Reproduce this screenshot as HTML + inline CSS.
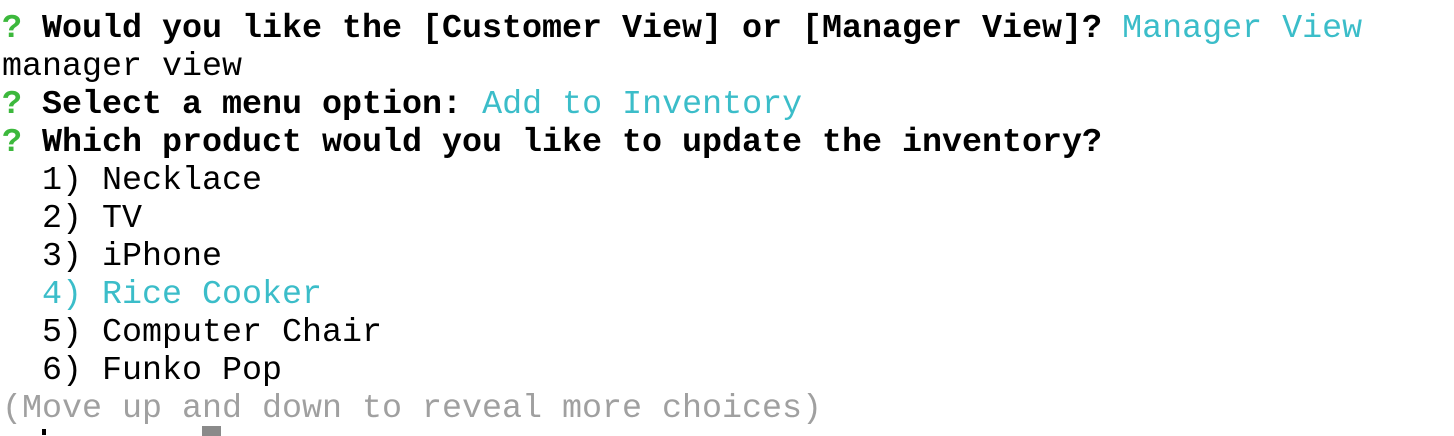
<!DOCTYPE html>
<html><head><style>
html,body{margin:0;padding:0;background:#fff;width:1454px;height:434px;overflow:hidden}
pre{margin:0;position:absolute;left:2px;top:10px;font-family:"Liberation Mono","DejaVu Sans Mono",monospace;font-size:33.33px;line-height:38px;color:#000}
.g{color:#3cb83c}.c{color:#3bbdc9}.b{font-weight:bold}.gr{color:#a0a0a0}
.cur{position:absolute;left:202px;top:426px;width:19px;height:10px;background:#8a8a8a}
.dot{position:absolute;left:42px;top:429px;width:4px;height:6px;background:#000}
</style></head><body>
<pre><span class="g b">?</span> <span class="b">Would you like the [Customer View] or [Manager View]?</span> <span class="c">Manager View</span>
manager view
<span class="g b">?</span> <span class="b">Select a menu option:</span> <span class="c">Add to Inventory</span>
<span class="g b">?</span> <span class="b">Which product would you like to update the inventory?</span>
  1) Necklace
  2) TV
  3) iPhone
<span class="c">  4) Rice Cooker</span>
  5) Computer Chair
  6) Funko Pop
<span class="gr">(Move up and down to reveal more choices)</span></pre>
<div class="dot"></div><div class="cur"></div>
</body></html>
